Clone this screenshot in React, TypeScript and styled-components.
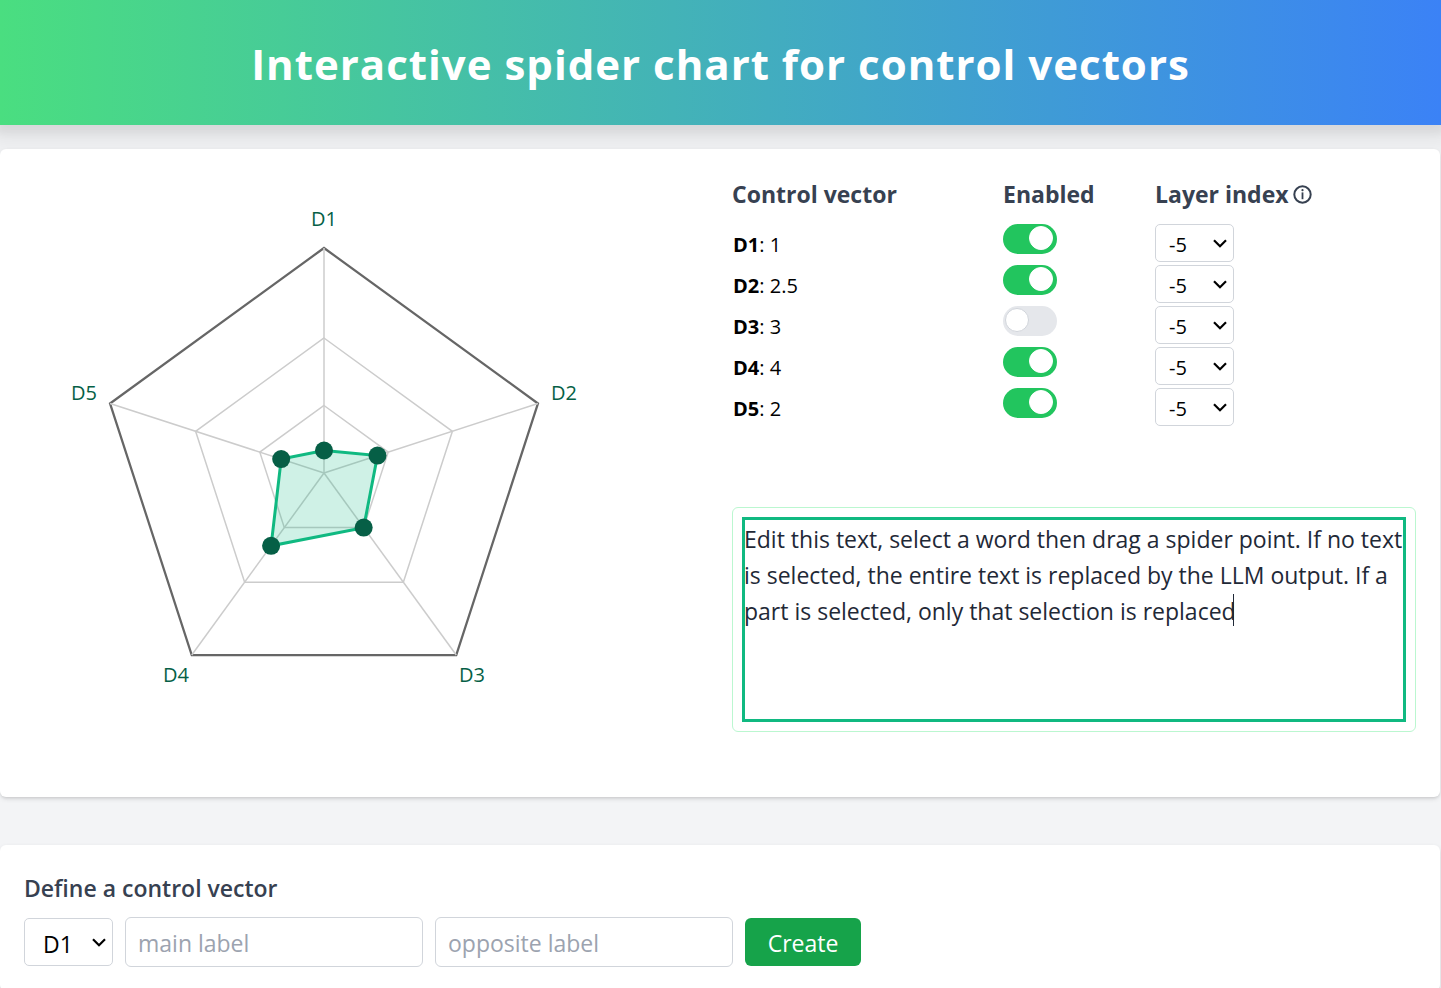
import React, { useState } from "react";
import styled, { createGlobalStyle } from "styled-components";

const GlobalStyle = createGlobalStyle`
  *, *::before, *::after { box-sizing: border-box; }
  body {
    margin: 0;
    background: #f3f4f6;
    color: #000;
    font-family: "Open Sans", "Noto Sans", sans-serif;
    font-size: 20px;
    line-height: 30px;
  }
  button, input, select, textarea { font: inherit; color: inherit; margin: 0; }
`;

const Header = styled.header`
  padding: 37px 36px 34px;
  background: linear-gradient(to right, #4ade80, #3b82f6);
  box-shadow: 0 4px 8px 4px rgba(0, 0, 0, 0.06), 0 8px 20px 12px rgba(0, 0, 0, 0.06);
`;

const Title = styled.h1`
  margin: 0;
  color: #fff;
  font-size: 42px;
  font-weight: 700;
  line-height: 54px;
  letter-spacing: 1px;
  text-align: center;
`;

const Main = styled.main`
  display: flex;
  flex-direction: column;
  gap: 48px;
  padding: 24px 1px 0 0;
`;

const Card = styled.section`
  padding: 24px;
  background: #fff;
  border-radius: 6px;
  box-shadow: 0 2px 5px rgba(0, 0, 0, 0.1), 0 2px 3px -1px rgba(0, 0, 0, 0.1);
`;

const SplitCard = styled(Card)`
  display: grid;
  grid-template-columns: minmax(0, 1fr) minmax(0, 1fr);
  gap: 24px;
`;

const ChartSvg = styled.svg`
  display: block;
  width: 600px;
  max-width: 100%;
  height: auto;
`;

const ChartLabel = styled.text`
  fill: #065f46;
  font-size: 20px;
  text-anchor: middle;
`;

const Side = styled.div`
  display: flex;
  flex-direction: column;
  gap: 78px;
`;

const VectorTable = styled.table`
  width: 100%;
  table-layout: fixed;
  border-collapse: collapse;
`;

const HeadCell = styled.th<{ $width?: string }>`
  width: ${(p) => p.$width ?? "auto"};
  height: 51px;
  padding: 3px 0 0;
  color: #374151;
  font-size: 23px;
  font-weight: 700;
  line-height: 36px;
  text-align: left;
  vertical-align: top;
  white-space: nowrap;
`;

const HeadLabel = styled.span`
  display: flex;
  align-items: center;
  gap: 4px;
`;

const Cell = styled.td<{ $text?: boolean }>`
  height: 41px;
  padding: ${(p) => (p.$text ? "6px 0 0 1px" : "0")};
  vertical-align: top;
`;

const Toggle = styled.input`
  display: block;
  position: relative;
  appearance: none;
  width: 54px;
  height: 30px;
  border-radius: 15px;
  background: #e5e7eb;
  cursor: pointer;

  &::after {
    content: "";
    position: absolute;
    top: 2px;
    left: 2px;
    width: 24px;
    height: 24px;
    border: 1px solid #d1d5db;
    border-radius: 50%;
    background: #fff;
  }
  &:checked { background: #22c55e; }
  &:checked::after { left: 26px; border-color: #fff; }
`;

const SelectWrap = styled.span<{ $large?: boolean }>`
  position: relative;
  display: block;
  width: ${(p) => (p.$large ? 89 : 79)}px;
  height: ${(p) => (p.$large ? 48 : 38)}px;
`;

const SelectBox = styled.select<{ $large?: boolean }>`
  appearance: none;
  width: 100%;
  height: 100%;
  padding: ${(p) => (p.$large ? "3px 0 0 18px" : "3px 0 0 13px")};
  border: 1px solid #d1d5db;
  border-radius: 5px;
  background: #fff;
  font-size: ${(p) => (p.$large ? 23 : 20)}px;
`;

const SelectArrow = styled.svg`
  position: absolute;
  top: calc(50% - 4px);
  right: 7px;
  width: 14px;
  height: 9px;
  fill: none;
  stroke: #000;
  stroke-width: 2.2;
  pointer-events: none;
`;

const Editor = styled.div`
  position: relative;
  padding: 9px;
  border: 1px solid #bbf7d0;
  border-radius: 6px;
`;

const EditorText = styled.textarea`
  display: block;
  width: 100%;
  height: 205px;
  padding: 4px 0 3px 2px;
  border: 0;
  outline: 3px solid #10b981;
  outline-offset: -3px;
  resize: none;
  background: transparent;
  color: #1f2937;
  font-size: 23px;
  line-height: 36px;
`;

const Caret = styled.span`
  position: absolute;
  top: 86px;
  left: 500px;
  width: 1px;
  height: 32px;
  background: #1f2937;
`;

const FormTitle = styled.h2`
  margin: 0 0 11px;
  padding-top: 1px;
  color: #374151;
  font-size: 23px;
  font-weight: 600;
  line-height: 36px;
`;

const FormRow = styled.form`
  display: flex;
  flex-wrap: wrap;
  align-items: center;
  gap: 12px;
`;

const TextField = styled.input`
  width: 298px;
  height: 50px;
  padding: 2px 12px 0;
  border: 1px solid #d1d5db;
  border-radius: 6px;
  background: #fff;
  font-size: 23px;
  &::placeholder { color: #9ca3af; opacity: 1; }
`;

const CreateButton = styled.button`
  width: 116px;
  height: 48px;
  padding: 2px 0 0;
  border: 0;
  border-radius: 6px;
  background: #16a34a;
  color: #fff;
  font-size: 23px;
  cursor: pointer;
`;

type Vector = { name: string; value: number; enabled: boolean };

const initialVectors: Vector[] = [
  { name: "D1", value: 1, enabled: true },
  { name: "D2", value: 2.5, enabled: true },
  { name: "D3", value: 3, enabled: false },
  { name: "D4", value: 4, enabled: true },
  { name: "D5", value: 2, enabled: true },
];

const layers = [-5, -6, -7, -8, -9, -10];
const center = 300;
const radius = 225;

const labelSpots = [
  { x: 300, y: 53 },
  { x: 540, y: 227 },
  { x: 448, y: 509 },
  { x: 152, y: 509 },
  { x: 60, y: 227 },
];

function spoke(index: number, share: number): [number, number] {
  const angle = (index * 2 * Math.PI) / 5 - Math.PI / 2;
  return [center + Math.cos(angle) * radius * share, center + Math.sin(angle) * radius * share];
}

function ring(shares: number[]) {
  return shares.map((share, i) => spoke(i, share).join(",")).join(" ");
}

function SpiderChart({ vectors }: { vectors: Vector[] }) {
  const shares = vectors.map((v) => v.value / 10);
  return (
    <ChartSvg viewBox="0 0 600 600" role="img" aria-label="Spider chart">
      <polygon points={ring([1, 1, 1, 1, 1])} fill="none" stroke="#666" strokeWidth="2.25" />
      {[0.6, 0.3].map((s) => (
        <polygon key={s} points={ring([s, s, s, s, s])} fill="none" stroke="#ccc" strokeWidth="1.5" />
      ))}
      {vectors.map((v, i) => {
        const [x, y] = spoke(i, 1);
        return <line key={v.name} x1={center} y1={center} x2={x} y2={y} stroke="#ccc" strokeWidth="1.5" />;
      })}
      <polygon points={ring(shares)} fill="#10b981" fillOpacity="0.2" stroke="#10b981" strokeWidth="3" />
      {vectors.map((v, i) => {
        const [x, y] = spoke(i, shares[i]);
        return <circle key={v.name} cx={x} cy={y} r="9" fill="#065f46" />;
      })}
      {vectors.map((v, i) => (
        <ChartLabel key={v.name} x={labelSpots[i].x} y={labelSpots[i].y}>{v.name}</ChartLabel>
      ))}
    </ChartSvg>
  );
}

function Arrow() {
  return (
    <SelectArrow viewBox="0 0 14 9" aria-hidden="true">
      <path d="M1 1.2 L7 7.2 L13 1.2" />
    </SelectArrow>
  );
}

function InfoIcon() {
  return (
    <svg width="19" height="19" viewBox="0 0 19 19" fill="none" stroke="currentColor" aria-hidden="true">
      <circle cx="9.5" cy="9.5" r="8.2" strokeWidth="2" />
      <path d="M9.5 7.4V14.2" strokeWidth="1.8" />
      <circle cx="9.5" cy="5.2" r="1.1" fill="currentColor" stroke="none" />
    </svg>
  );
}

export default function App() {
  const [vectors, setVectors] = useState(initialVectors);
  const [text, setText] = useState(
    "Edit this text, select a word then drag a spider point. If no text is selected, the entire text is replaced by the LLM output. If a part is selected, only that selection is replaced"
  );

  const toggle = (name: string) =>
    setVectors((all) => all.map((v) => (v.name === name ? { ...v, enabled: !v.enabled } : v)));

  return (
    <>
      <GlobalStyle />
      <Header>
        <Title>Interactive spider chart for control vectors</Title>
      </Header>
      <Main>
        <SplitCard>
          <SpiderChart vectors={vectors} />
          <Side>
            <VectorTable>
              <thead>
                <tr>
                  <HeadCell scope="col">Control vector</HeadCell>
                  <HeadCell scope="col" $width="152px">Enabled</HeadCell>
                  <HeadCell scope="col" $width="261px">
                    <HeadLabel>Layer index <InfoIcon /></HeadLabel>
                  </HeadCell>
                </tr>
              </thead>
              <tbody>
                {vectors.map((v) => (
                  <tr key={v.name}>
                    <Cell $text><b>{v.name}</b>: {v.value}</Cell>
                    <Cell>
                      <Toggle
                        type="checkbox"
                        aria-label={`${v.name} enabled`}
                        checked={v.enabled}
                        onChange={() => toggle(v.name)}
                      />
                    </Cell>
                    <Cell>
                      <SelectWrap>
                        <SelectBox aria-label={`${v.name} layer index`} defaultValue={-5}>
                          {layers.map((n) => <option key={n}>{n}</option>)}
                        </SelectBox>
                        <Arrow />
                      </SelectWrap>
                    </Cell>
                  </tr>
                ))}
              </tbody>
            </VectorTable>
            <Editor>
              <EditorText
                aria-label="Text"
                spellCheck={false}
                value={text}
                onChange={(e) => setText(e.target.value)}
              />
              <Caret />
            </Editor>
          </Side>
        </SplitCard>
        <Card>
          <FormTitle>Define a control vector</FormTitle>
          <FormRow onSubmit={(e) => e.preventDefault()}>
            <SelectWrap $large>
              <SelectBox $large aria-label="Vector" defaultValue="D1">
                {vectors.map((v) => <option key={v.name}>{v.name}</option>)}
              </SelectBox>
              <Arrow />
            </SelectWrap>
            <TextField aria-label="Main label" placeholder="main label" />
            <TextField aria-label="Opposite label" placeholder="opposite label" />
            <CreateButton type="submit">Create</CreateButton>
          </FormRow>
        </Card>
      </Main>
    </>
  );
}
